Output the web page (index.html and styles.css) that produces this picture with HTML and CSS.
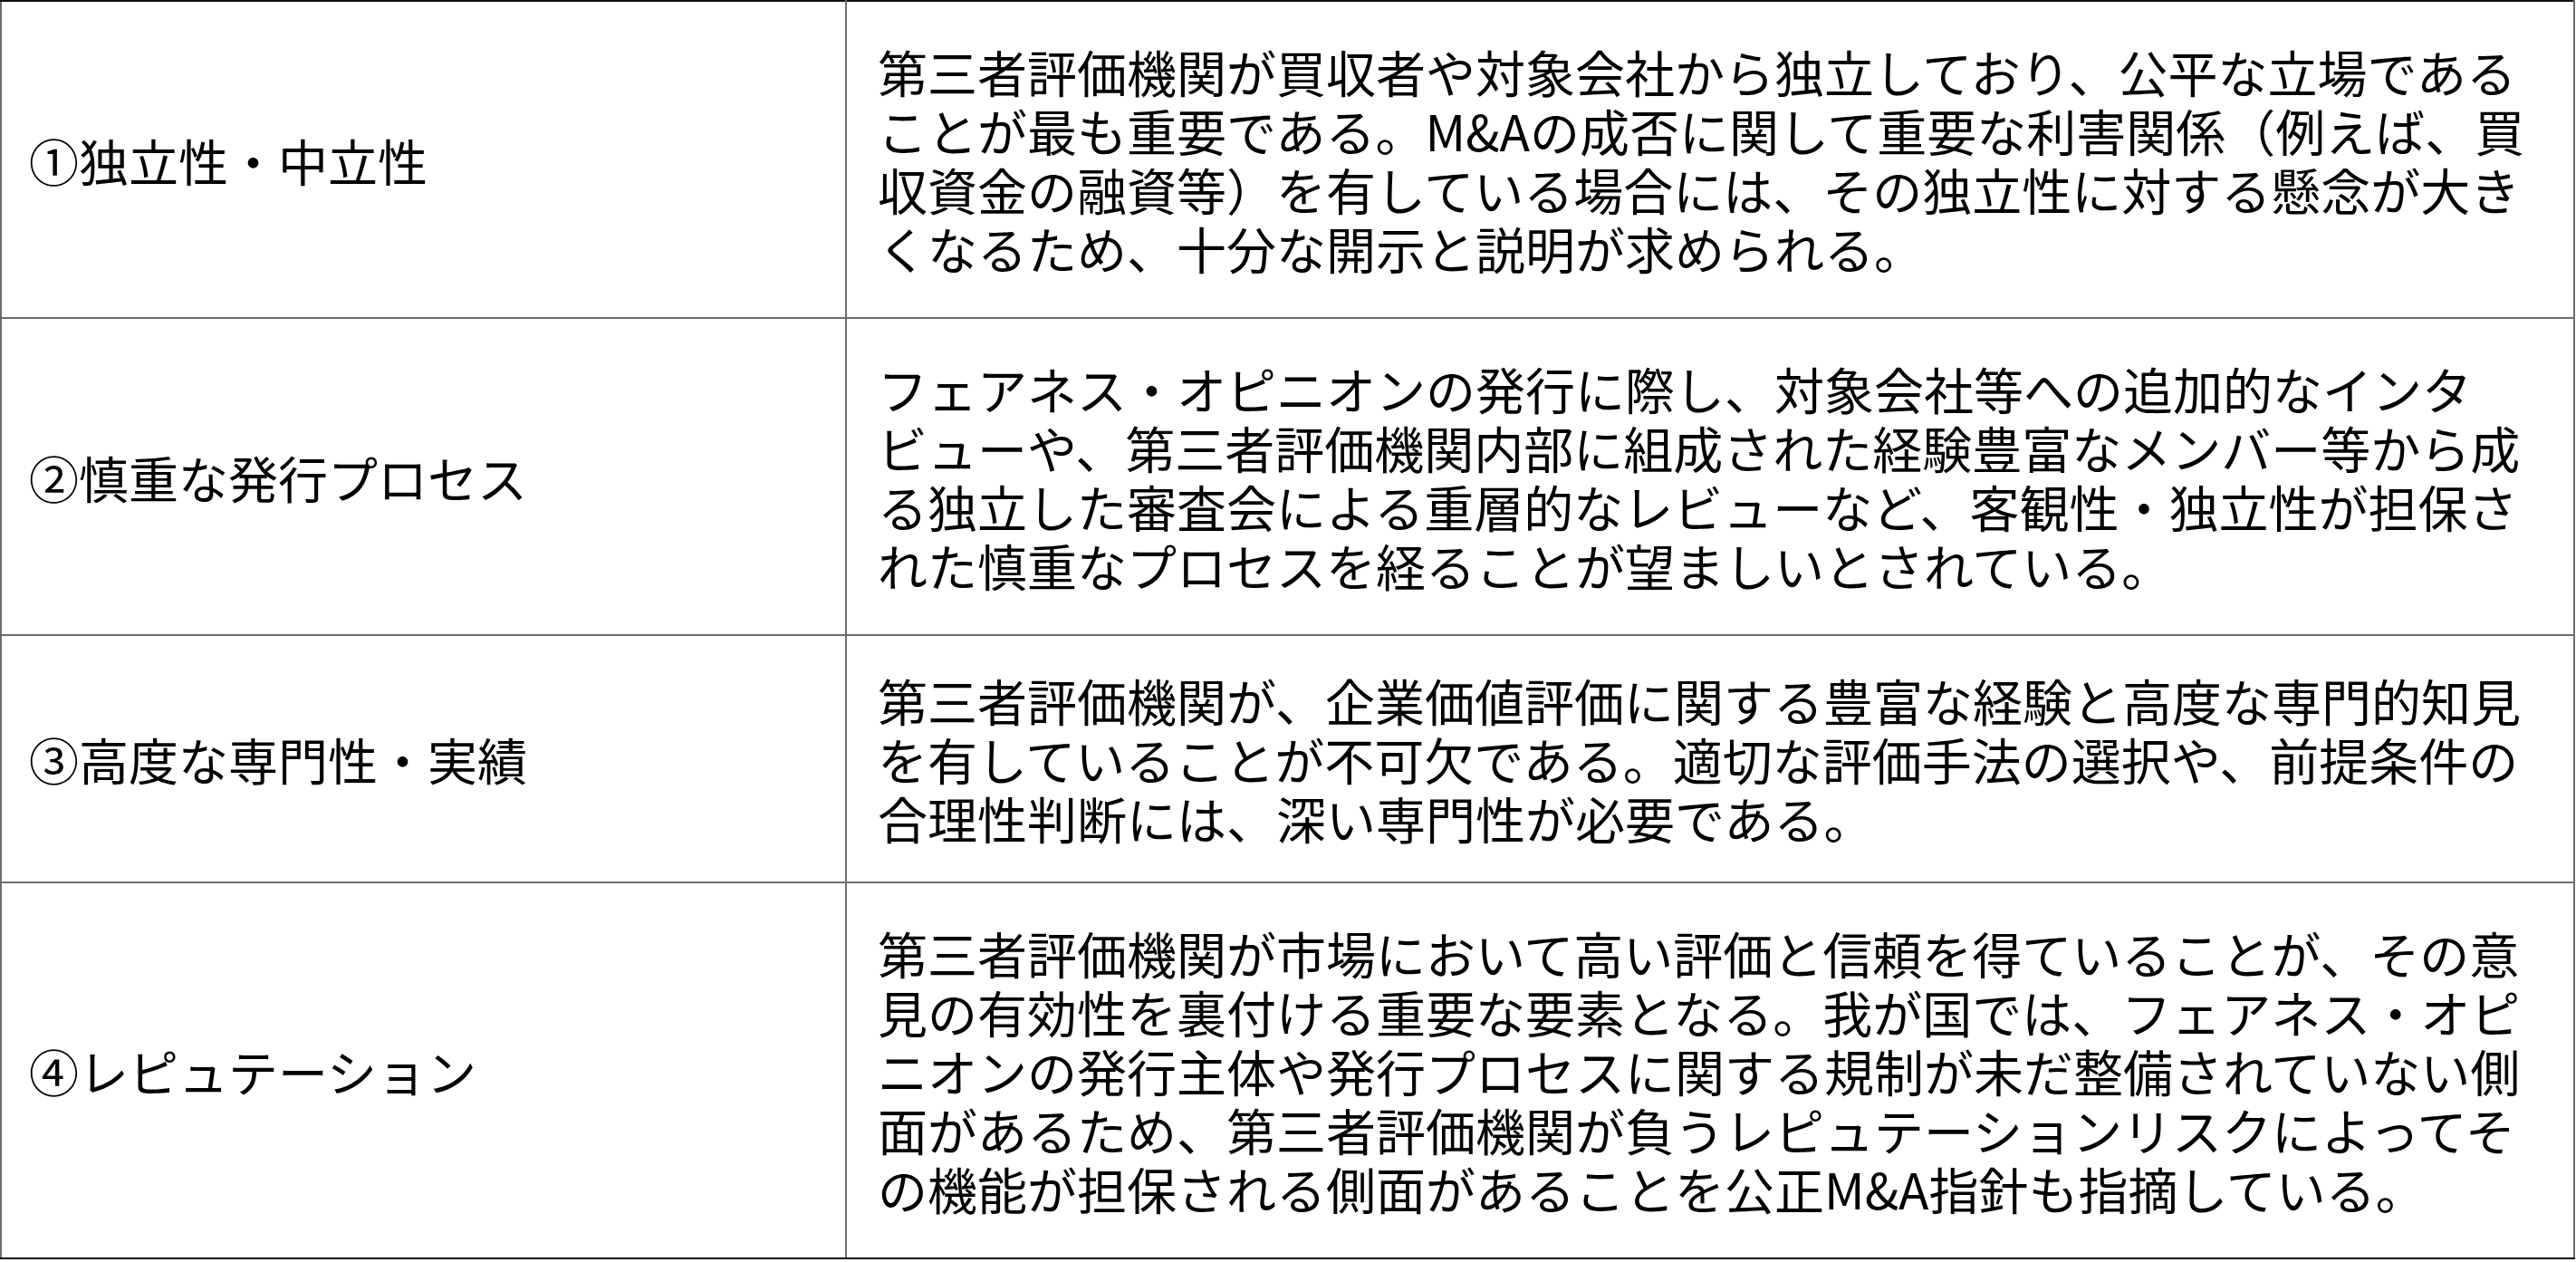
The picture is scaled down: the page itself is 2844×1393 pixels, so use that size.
FILE: index.html
```html
<!DOCTYPE html>
<html lang="ja">
<head>
<meta charset="utf-8">
<title>フェアネス・オピニオン</title>
<link rel="stylesheet" href="styles.css">
</head>
<body>
<table class="criteria">
  <colgroup>
    <col class="col-head">
    <col class="col-body">
  </colgroup>
  <tbody>
    <tr>
      <th>①独立性・中立性</th>
      <td>第三者評価機関が買収者や対象会社から独立しており、公平な立場であることが最も重要である。M&amp;Aの成否に関して重要な利害関係（例えば、買収資金の融資等）を有している場合には、その独立性に対する懸念が大きくなるため、十分な開示と説明が求められる。</td>
    </tr>
    <tr>
      <th>②慎重な発行プロセス</th>
      <td>フェアネス・オピニオンの発行に際し、対象会社等への追加的なインタビューや、第三者評価機関内部に組成された経験豊富なメンバー等から成る独立した審査会による重層的なレビューなど、客観性・独立性が担保された慎重なプロセスを経ることが望ましいとされている。</td>
    </tr>
    <tr class="compact">
      <th>③高度な専門性・実績</th>
      <td>第三者評価機関が、企業価値評価に関する豊富な経験と高度な専門的知見を有していることが不可欠である。適切な評価手法の選択や、前提条件の合理性判断には、深い専門性が必要である。</td>
    </tr>
    <tr>
      <th>④レピュテーション</th>
      <td>第三者評価機関が市場において高い評価と信頼を得ていることが、その意見の有効性を裏付ける重要な要素となる。我が国では、フェアネス・オピニオンの発行主体や発行プロセスに関する規制が未だ整備されていない側面があるため、第三者評価機関が負うレピュテーションリスクによってその機能が担保される側面があることを公正M&amp;A指針も指摘している。</td>
    </tr>
  </tbody>
</table>
</body>
</html>
```
FILE: styles.css
```css
html, body {
  margin: 0;
  padding: 0;
  background: #ffffff;
}

body {
  font-family: "Noto Sans CJK JP", "Noto Sans", sans-serif;
  color: #000000;
}

.criteria {
  border-collapse: collapse;
  width: 2843px;
  table-layout: fixed;
  font-size: 55px;
  line-height: 65px;
  text-spacing-trim: space-all;
  line-break: strict;
}

.col-head {
  width: 933px;
}

.criteria th,
.criteria td {
  border: 2px solid #6e6e6e;
  padding: 44px 34px;
  vertical-align: middle;
  text-align: left;
  font-weight: 400;
}

.criteria th {
  padding-left: 30px;
}

.criteria tr:first-child th,
.criteria tr:first-child td {
  border-top-color: #111111;
}

.criteria tr:last-child th,
.criteria tr:last-child td {
  border-bottom-color: #111111;
}

.criteria .compact th,
.criteria .compact td {
  padding-top: 38px;
  padding-bottom: 38px;
}
```
